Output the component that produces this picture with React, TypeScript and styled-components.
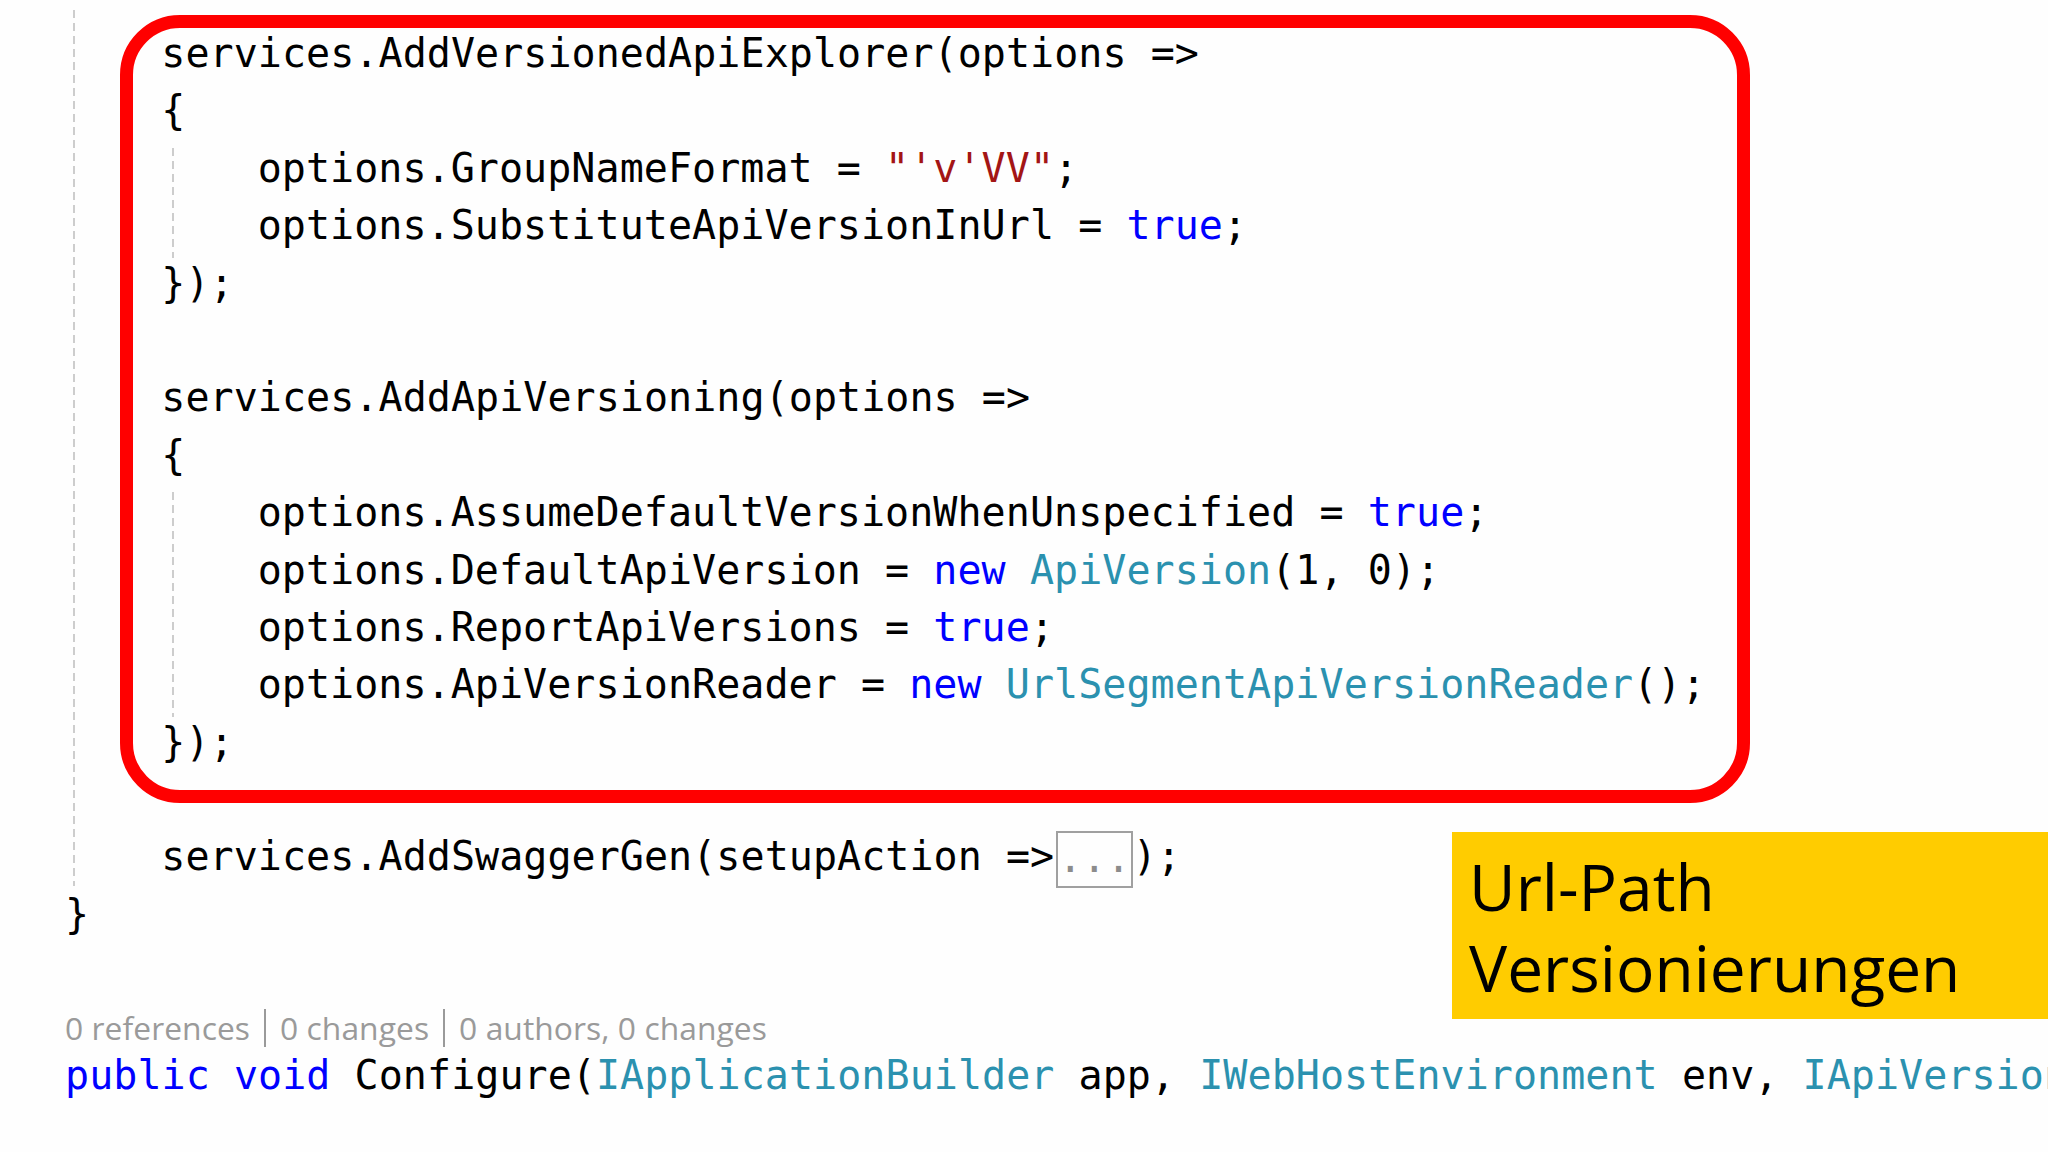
import styled, { createGlobalStyle } from "styled-components";

const LINE = 57.4;

const GlobalStyle = createGlobalStyle`
  * {
    box-sizing: border-box;
  }

  html,
  body {
    margin: 0;
    padding: 0;
    background: #fefefe;
    overflow: hidden;
  }
`;

const Page = styled.main`
  position: relative;
  width: 2048px;
  height: 1152px;
  overflow: hidden;
  background: #fefefe;
`;

const Editor = styled.div`
  padding: 25px 0 0 65px;
  font-family: "DejaVu Sans Mono", "Liberation Mono", monospace;
  font-size: 40px;
  letter-spacing: 0.05px;
  color: #000;
  white-space: pre;
`;

const Line = styled.div`
  height: ${LINE}px;
  line-height: ${LINE}px;
`;

const Block = styled.div<{ $guide: number; $top: number; $bottom: number }>`
  position: relative;
  padding-left: 4ch;

  &::before {
    content: "";
    position: absolute;
    left: ${({ $guide }) => $guide}px;
    top: ${({ $top }) => $top}px;
    bottom: ${({ $bottom }) => $bottom}px;
    width: 2px;
    background: repeating-linear-gradient(
      to bottom,
      #cdcdcd 0 8px,
      transparent 8px 13px
    );
  }
`;

const Highlight = styled.div`
  position: relative;
  width: fit-content;

  &::after {
    content: "";
    position: absolute;
    inset: -10px -44px -32px -41px;
    border: 13px solid #ff0000;
    border-radius: 60px;
    pointer-events: none;
  }
`;

const Kw = styled.span`
  color: #0000ff;
`;

const Type = styled.span`
  color: #2b91af;
`;

const Str = styled.span`
  color: #a31515;
`;

const Collapsed = styled.span`
  display: inline-block;
  vertical-align: top;
  margin: 3px 0 0 2px;
  height: 57px;
  line-height: 50px;
  border: 2px solid #a0a0a0;
  color: #8c8c8c;
`;

const CodeLens = styled.div`
  display: flex;
  align-items: center;
  height: 46px;
  margin-top: ${LINE + 4}px;
  margin-bottom: -4px;
  font-family: "Open Sans", "Noto Sans", sans-serif;
  font-size: 31.8px;
  color: #9a9a9a;
  white-space: nowrap;
`;

const Sep = styled.span`
  display: inline-block;
  width: 2px;
  height: 38px;
  margin: 0 14px;
  background: #9a9a9a;
`;

const Label = styled.aside`
  position: absolute;
  left: 1452px;
  right: 0;
  top: 832px;
  height: 187px;
  padding: 14px 0 0 17px;
  background: #ffcc00;
  font-family: "Open Sans", "Noto Sans", sans-serif;
  font-size: 64px;
  line-height: 81px;
  color: #000;
`;

export default function App() {
  return (
    <Page>
      <GlobalStyle />
      <Editor>
        <Block $guide={8} $top={-15} $bottom={0}>
          <Highlight>
            <Line>services.AddVersionedApiExplorer(options =&gt;</Line>
            <Line>{"{"}</Line>
            <Block $guide={11} $top={8} $bottom={-3}>
              <Line>
                options.GroupNameFormat = <Str>"'v'VV"</Str>;
              </Line>
              <Line>
                options.SubstituteApiVersionInUrl = <Kw>true</Kw>;
              </Line>
            </Block>
            <Line>{"});"}</Line>
            <Line> </Line>
            <Line>services.AddApiVersioning(options =&gt;</Line>
            <Line>{"{"}</Line>
            <Block $guide={11} $top={8} $bottom={-3}>
              <Line>
                options.AssumeDefaultVersionWhenUnspecified = <Kw>true</Kw>;
              </Line>
              <Line>
                options.DefaultApiVersion = <Kw>new</Kw>{" "}
                <Type>ApiVersion</Type>(1, 0);
              </Line>
              <Line>
                options.ReportApiVersions = <Kw>true</Kw>;
              </Line>
              <Line>
                options.ApiVersionReader = <Kw>new</Kw>{" "}
                <Type>UrlSegmentApiVersionReader</Type>();
              </Line>
            </Block>
            <Line>{"});"}</Line>
          </Highlight>
          <Line> </Line>
          <Line>
            services.AddSwaggerGen(setupAction =&gt;<Collapsed>...</Collapsed>);
          </Line>
        </Block>
        <Line>{"}"}</Line>
        <CodeLens>
          0 references
          <Sep />0 changes
          <Sep />0 authors, 0 changes
        </CodeLens>
        <Line>
          <Kw>public</Kw> <Kw>void</Kw> Configure(
          <Type>IApplicationBuilder</Type> app, <Type>IWebHostEnvironment</Type>{" "}
          env, <Type>IApiVersionDescriptionProvider</Type> provider)
        </Line>
      </Editor>
      <Label>
        Url-Path
        <br />
        Versionierungen
      </Label>
    </Page>
  );
}
